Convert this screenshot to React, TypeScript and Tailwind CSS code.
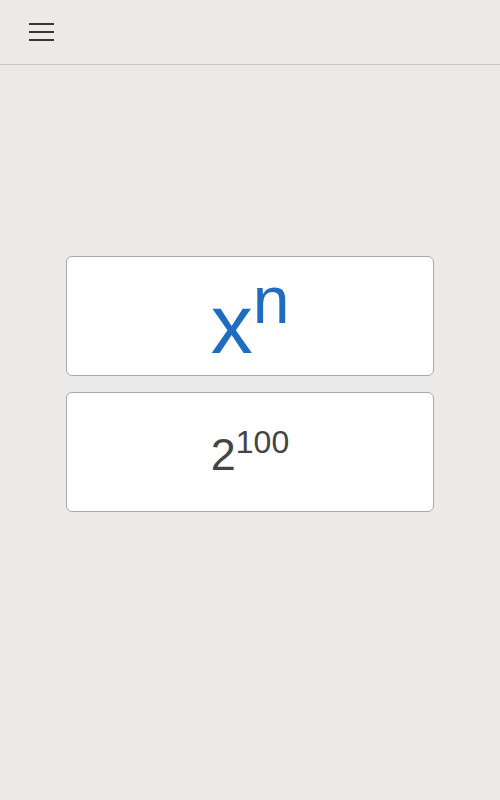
export default function App() {
  return (
    <div className="min-h-[800px] w-full bg-[#ebeae8] font-['Liberation_Sans',Arial,sans-serif]">
      <header className="h-[65px] border-b border-[#c6c5c3] pl-[29px] pt-[23px]">
        <button className="flex flex-col gap-[6px]" aria-label="Menu">
          <span className="block h-[2px] w-[25px] bg-[#363636]" />
          <span className="block h-[2px] w-[25px] bg-[#363636]" />
          <span className="block h-[2px] w-[25px] bg-[#363636]" />
        </button>
      </header>
      <main className="flex flex-col items-center gap-4 pt-[191px]">
        <div className="flex h-[120px] w-[368px] justify-center rounded-[6px] border border-[#a9a9a9] bg-white">
          <div className="flex items-start pt-[10px] text-[#1f6cc0]">
            <span className="mt-[15px] text-[84px] leading-none">x</span>
            <span className="text-[66px] leading-none">n</span>
          </div>
        </div>
        <div className="flex h-[120px] w-[368px] justify-center rounded-[6px] border border-[#a9a9a9] bg-white">
          <div className="flex items-start pt-[33px] text-[#444444]">
            <span className="mt-[6px] text-[45px] leading-none">2</span>
            <span className="text-[32px] leading-none">100</span>
          </div>
        </div>
      </main>
    </div>
  );
}
